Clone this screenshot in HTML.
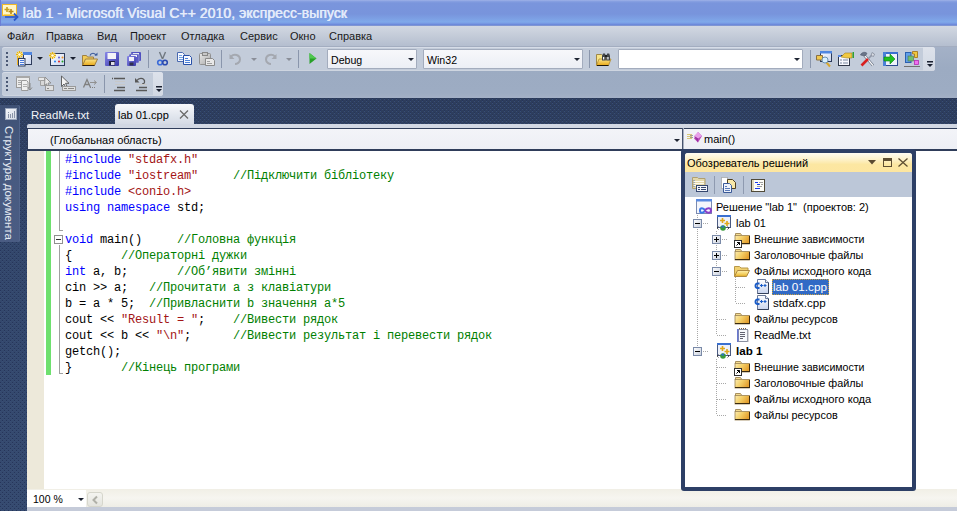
<!DOCTYPE html>
<html><head><meta charset="utf-8">
<style>
*{margin:0;padding:0;box-sizing:border-box}
html,body{width:957px;height:511px;overflow:hidden;background:#34496e;font-family:"Liberation Sans",sans-serif}
.a{position:absolute}
svg{position:absolute;overflow:visible}
#title{left:0;top:0;width:957px;height:26px;background:linear-gradient(#a3b5e8 0,#8aa2e2 1px,#7a95dc 3px,#7894dc 14px,#80a9ea 22px,#7492e0 24px,#6683d6 25px,#9aa8d0 26px)}
#title .t{left:22.5px;top:4.5px;font-size:13.9px;font-weight:normal;color:#e4ecfb;white-space:pre;letter-spacing:0.1px;text-shadow:0.6px 0 0 #e4ecfb}
#menu{left:0;top:26px;width:957px;height:21px;background:linear-gradient(#d2d8e2,#c3cbd8 50%,#b4becf);border-bottom:1px solid #a3adc0}
#menu span{position:absolute;top:4px;font-size:11px;color:#1a1a1a}
#dock{left:0;top:47px;width:957px;height:51px;background:linear-gradient(#a4b1c7,#9cabc2 40%,#9dacc3 90%,#a3b0c6)}
.tb{background:#c3ccda;border-radius:3px;box-shadow:inset 0 1px 0 #d6dce7,inset 0 -1px 0 #ced5e0}
.ovf{background:linear-gradient(#dde2eb,#d2d8e3);border-radius:0 3px 3px 0}
.sep{width:1px;background:#8592a8;border-right:1px solid #e4e8ef;width:2px}
.grip{width:2px;background:repeating-linear-gradient(#4a5874 0 2px,transparent 2px 4px)}
.combo{background:linear-gradient(#f7f8fb,#eceff5);border:1px solid #a3acbd;border-radius:1px;font-size:10.6px;color:#000;padding:3.5px 0 0 3px}
.dd{width:0;height:0;border-left:3px solid transparent;border-right:3px solid transparent;border-top:3px solid #1e2432}
#dark{left:0;top:98px;width:957px;height:413px}
.code{font-family:"Liberation Mono",monospace;font-size:12px;letter-spacing:-0.2px;color:#000;white-space:pre;line-height:16px}
.k{color:#0000ff}.s{color:#a31515}.c{color:#008000}
.tree div{position:absolute;white-space:pre;font-size:11px;color:#000}
</style></head><body>
<!-- title -->
<div id="title" class="a">
 <svg style="left:0;top:0" width="22" height="24" viewBox="0 0 22 24">
  <rect x="0" y="0" width="1" height="26" fill="#6a7fd6"/>
  <rect x="2.5" y="4.5" width="14" height="11" fill="#fff6c8" stroke="#f0b828"/>
  <path d="M3.5 14.5h12" stroke="#f8d868" stroke-width="1"/>
  <path d="M4.5 9.5h5M7 7v5" stroke="#c8a020" stroke-width="1.6"/>
  <path d="M8.5 11.5h5M11 9v5" stroke="#b88818" stroke-width="1.6"/>
  <path d="M5 17h11" stroke="#2a58c8" stroke-width="1.6"/>
  <path d="M14 13.5l3.5 3.5-3.5 3.5" stroke="#2a58c8" stroke-width="1.8" fill="none"/>
 </svg>
 <div class="a t">lab 1 - Microsoft Visual C++ 2010, экспресс-выпуск</div>
</div>
<!-- menu -->
<div id="menu" class="a">
 <span style="left:7px">Файл</span>
 <span style="left:46px">Правка</span>
 <span style="left:97px">Вид</span>
 <span style="left:130px">Проект</span>
 <span style="left:181px">Отладка</span>
 <span style="left:240px">Сервис</span>
 <span style="left:290px">Окно</span>
 <span style="left:329px">Справка</span>
</div>
<!-- toolbars -->
<div id="dock" class="a"></div>
<div class="a tb" style="left:2px;top:47px;width:933px;height:24px"></div>
<div class="a ovf" style="left:923px;top:47px;width:12px;height:24px"></div>
<div class="a tb" style="left:2px;top:72px;width:161px;height:24px"></div>
<div class="a ovf" style="left:153px;top:72px;width:10px;height:24px"></div>
<div class="a grip" style="left:6px;top:52px;height:15px"></div>
<div class="a grip" style="left:6px;top:77px;height:15px"></div>
<svg style="left:0;top:0" width="957" height="98" viewBox="0 0 957 98">
 <defs>
  <linearGradient id="gwin" x1="0" y1="0" x2="1" y2="1"><stop offset="0" stop-color="#ffffff"/><stop offset="1" stop-color="#c8d4ee"/></linearGradient>
  <linearGradient id="gfold" x1="0" y1="0" x2="0" y2="1"><stop offset="0" stop-color="#fbe58a"/><stop offset="1" stop-color="#e8a818"/></linearGradient>
  <linearGradient id="gflop" x1="0" y1="0" x2="1" y2="1"><stop offset="0" stop-color="#8888e8"/><stop offset="1" stop-color="#3838a8"/></linearGradient>
  <linearGradient id="ggray" x1="0" y1="0" x2="1" y2="1"><stop offset="0" stop-color="#e8e8e8"/><stop offset="1" stop-color="#a8a8a8"/></linearGradient>
  <radialGradient id="gspark"><stop offset="0" stop-color="#fffbe0"/><stop offset="0.5" stop-color="#f8d850"/><stop offset="1" stop-color="#f0c030" stop-opacity="0.3"/></radialGradient>
 </defs>
 <!-- new project -->
 <rect x="23.5" y="52.5" width="8" height="12" fill="url(#gwin)" stroke="#2e3c5a"/>
 <rect x="23" y="52" width="9" height="3" fill="#4f86e0"/>
 <rect x="17" y="57" width="1.5" height="8" fill="#f0b020"/>
 <circle cx="19.5" cy="54.5" r="3.3" fill="#f8e070" opacity="0.85"/><path d="M16.0 54.5h7M19.5 51.0v7M17.0 52.0l5 5M22.0 52.0l-5 5" stroke="#e8b010" stroke-width="1"/><circle cx="19.5" cy="54.5" r="1.3" fill="#fffef0"/>
 <rect x="18.5" y="58.5" width="6.5" height="7.5" fill="#f4f7ff" stroke="#2e3c5a"/>
 <path d="M20 60.5h4M20 62.5h4M20 64.5h4" stroke="#4a7ad8" stroke-width="1"/>
 <path d="M37 57h6l-3 3z" fill="#1a2030"/>
 <!-- add item -->
 <rect x="50.5" y="53.5" width="14" height="12" fill="url(#gwin)" stroke="#2e3c5a"/>
 <circle cx="59" cy="57.5" r="1" fill="#6060d0"/><circle cx="62.5" cy="57.5" r="1" fill="#f09020"/>
 <circle cx="55" cy="61.5" r="1" fill="#2080f0"/><circle cx="59" cy="61.5" r="1" fill="#e02020"/><circle cx="62.5" cy="61.5" r="1" fill="#20a020"/>
 <circle cx="52.5" cy="55.5" r="3.3" fill="#f8e070" opacity="0.85"/><path d="M49.0 55.5h7M52.5 52.0v7M50.0 53.0l5 5M55.0 53.0l-5 5" stroke="#e8b010" stroke-width="1"/><circle cx="52.5" cy="55.5" r="1.3" fill="#fffef0"/>
 <path d="M70 57h6l-3 3z" fill="#1a2030"/>
 <!-- open -->
 <path d="M82.5 65.5V55.5h4l1 1.5h6v8.5z" fill="#f2cc58" stroke="#a08040"/>
 <path d="M82.5 65.5l3-6.5h12l-3 6.5z" fill="url(#gfold)" stroke="#a08040"/>
 <path d="M82.5 65.5h12" stroke="#302010" stroke-width="1"/>
 <path d="M90 55.5c1-3 5-3 6 0" stroke="#3a5a9a" stroke-width="1.2" fill="none"/>
 <path d="M94.5 55.5h3v-3z" fill="#3a5a9a"/>
 <!-- save -->
 <rect x="105" y="52" width="14" height="14" rx="1" fill="url(#gflop)"/>
 <rect x="107.5" y="53" width="8.5" height="6" fill="#f4f4f8"/>
 <rect x="109" y="61" width="6" height="4.5" fill="#202040"/>
 <rect x="111" y="62" width="3.5" height="3" fill="#e0e0e8"/>
 <!-- save all -->
 <rect x="131" y="52" width="10" height="9" rx="1" fill="#5050c0"/>
 <rect x="133" y="53" width="6" height="2" fill="#f0f0f8"/>
 <rect x="129" y="54" width="10" height="9" rx="1" fill="#5a5ac8" stroke="#c0c8d8" stroke-width="0.5"/>
 <rect x="131" y="55" width="6" height="2" fill="#f0f0f8"/>
 <rect x="127" y="56" width="9" height="10" rx="1" fill="url(#gflop)"/>
 <rect x="129" y="57" width="5" height="4" fill="#f0f0f8"/>
 <rect x="129.5" y="62.5" width="4" height="3" fill="#303050"/>
 <!-- sep -->
 <rect x="148" y="50" width="1" height="18" fill="#8a96ac"/>
 <!-- cut -->
 <path d="M159.5 52l3 7M165.5 52l-3 7" stroke="#707880" stroke-width="1.4"/>
 <circle cx="160" cy="62.5" r="2.3" fill="none" stroke="#3a6ad8" stroke-width="1.6"/>
 <circle cx="165" cy="62.5" r="2.3" fill="none" stroke="#2a4ab0" stroke-width="1.6"/>
 <!-- copy -->
 <path d="M177.5 52.5h5l2 2v7h-7z" fill="#f6f8ff" stroke="#4a6ab0"/>
 <path d="M179 55.5h3M179 57.5h4M179 59.5h4" stroke="#70a0e0"/>
 <path d="M183.5 55.5h6l2 2v7h-8z" fill="#f6f8ff" stroke="#2850a8"/>
 <path d="M185 58.5h3M185 60.5h5M185 62.5h5" stroke="#4a80d8"/>
 <!-- paste gray -->
 <rect x="199.5" y="53.5" width="11" height="11" rx="1" fill="url(#ggray)" stroke="#909090"/>
 <rect x="202.5" y="52.5" width="5" height="3" fill="#c8c8c8" stroke="#888"/>
 <path d="M205.5 58.5h7l2 2v5h-9z" fill="#e8e8e8" stroke="#8a8a8a"/>
 <path d="M207 61.5h3M207 63.5h5" stroke="#a0a0a0"/>
 <!-- sep -->
 <rect x="221" y="50" width="1" height="18" fill="#8a96ac"/>
 <!-- undo -->
 <path d="M231 56.5c3-3 9-2 9 3c0 3-3 4.5-5 4.5" stroke="#a4a8b0" stroke-width="2" fill="none"/>
 <path d="M229.5 54v5h5z" fill="#a4a8b0"/>
 <path d="M251 58h6l-3 3z" fill="#8a8e98"/>
 <!-- redo -->
 <path d="M275 56.5c-3-3-9-2-9 3c0 3 3 4.5 5 4.5" stroke="#a4a8b0" stroke-width="2" fill="none"/>
 <path d="M276.5 54v5h-5z" fill="#a4a8b0"/>
 <path d="M286 58h6l-3 3z" fill="#8a8e98"/>
 <!-- sep -->
 <rect x="298" y="50" width="1" height="18" fill="#8a96ac"/>
 <!-- play -->
 <path d="M309.5 53l7 5.5-7 5.5z" fill="#28a028"/>
 <path d="M309.5 53l7 5.5h-7z" fill="#50c850"/>
 <!-- sep -->
 <rect x="589" y="50" width="1" height="18" fill="#8a96ac"/>
 <!-- find in files -->
 <path d="M596.5 65.5V54.5h5l1 1h3v4" fill="#f8e488" stroke="#a08848"/>
 <path d="M596.5 65.5l2.5-6.5h12l-2.5 6.5z" fill="url(#gfold)" stroke="#b08a30" stroke-width="0.8"/>
 <path d="M597 65.5h11.5" stroke="#201808" stroke-width="1"/>
 <path d="M602 60.5v-4.5l1-2.5h2l.8 2.5v4.5z" fill="#404448"/>
 <path d="M606.2 60.5v-4.5l1-2.5h2l.8 2.5v4.5z" fill="#404448"/>
 <rect x="605" y="55" width="2" height="2" fill="#202020"/>
 <rect x="603" y="57" width="1.3" height="2.5" fill="#f4f4f4"/>
 <rect x="607.3" y="57" width="1.3" height="2.5" fill="#f4f4f4"/>
 <!-- sep -->
 <rect x="810" y="50" width="1" height="18" fill="#8a96ac"/>
 <!-- find window -->
 <rect x="820.5" y="51.5" width="11" height="10" fill="url(#gwin)" stroke="#2e3c5a"/>
 <rect x="820" y="51" width="12" height="2.5" fill="#4f86e0"/>
 <path d="M816.5 60V55.5h6v4.5z" fill="#f0c850" stroke="#8a7040"/>
 <path d="M826.5 62.5l3.5 4" stroke="#d8a830" stroke-width="2"/>
 <circle cx="825" cy="60" r="3" fill="#d8f0ff" stroke="#6a90b0"/>
 <!-- properties -->
 <rect x="838.5" y="55.5" width="11" height="10" fill="#f6f8ff" stroke="#30384a"/>
 <rect x="838" y="55" width="3" height="2" fill="#5a8ae0"/>
 <path d="M840 60h2M843 60h5M840 63h2M843 63h5" stroke="#7a88a0"/>
 <path d="M841 57l4-4h7v5h-5z" fill="#f0c840" stroke="#a08020" stroke-width="0.6"/>
 <rect x="852.5" y="52" width="1.5" height="6" fill="#30a030"/>
 <!-- tools -->
 <path d="M864.5 55.5l8.5 10" stroke="#5a6478" stroke-width="2.6"/>
 <path d="M864.5 55.5l8.5 10" stroke="#f8f8f8" stroke-width="1.2"/>
 <path d="M860.5 55c1-3 5-3.5 6.5-1.5l-2 2.5z" fill="#6a7488" stroke="#4a5468" stroke-width="0.6"/>
 <path d="M868.5 58.5l5-5" stroke="#9098a8" stroke-width="1.6"/>
 <path d="M872 52.5l2.5 1.5-1 2.5-2.5-1z" fill="#d8dce4" stroke="#707888" stroke-width="0.6"/>
 <path d="M861.5 65.5l6.5-6.5" stroke="#d82020" stroke-width="2.6"/>
 <!-- export -->
 <rect x="883.5" y="52.5" width="14" height="13" fill="#eef2fa" stroke="#2a4a90"/>
 <rect x="883" y="52" width="15" height="2" fill="#3a70d0"/>
 <rect x="883" y="52" width="3" height="14" fill="#4a80d8"/>
 <path d="M884 57h6v-3l5 5-5 5v-3h-6z" fill="#20c020" stroke="#108010" stroke-width="0.6"/>
 <!-- class/toolbox -->
 <rect x="905.5" y="52.5" width="5.5" height="10" fill="#60a0e8" stroke="#2a60b0"/>
 <rect x="908" y="56" width="5.5" height="5" fill="#70c070" stroke="#507050" stroke-width="0.6"/>
 <path d="M912.5 51.5h5v6h-3v-3.5h-2z" fill="#f0c840" stroke="#a07010" stroke-width="0.8"/>
 <rect x="914.5" y="60.5" width="4" height="4" fill="#f070f0" stroke="#b030b0" stroke-width="0.8"/>
 <rect x="904" y="66" width="16" height="1" fill="#707070"/>
 <!-- chevrons -->
 <rect x="927" y="61" width="6" height="1.5" fill="#1a2030"/>
 <path d="M927 64h6l-3 3z" fill="#1a2030"/>
 <rect x="156" y="86" width="6" height="1.5" fill="#1a2030"/>
 <path d="M156 89h6l-3 3z" fill="#1a2030"/>
 <!-- toolbar 2 gray icons -->
 <rect x="16.5" y="76.5" width="13" height="11" fill="#ececec" stroke="#9a9a9a"/>
 <rect x="16" y="76" width="14" height="2" fill="#a8a8a8"/>
 <path d="M18 80.5h3M18 82.5h3M18 84.5h3" stroke="#a8a8a8" stroke-width="1"/>
 <path d="M21.5 80.5h5l1.5 1.5v8.5h-6.5z" fill="#f0f0f0" stroke="#9a9a9a"/>
 <path d="M23 84.5h4M23 86.5h4" stroke="#b0b0b0" stroke-width="1"/>
 <path d="M30 83v7M28 87.5l2 2.5 2-2.5" stroke="#8a8a8a" stroke-width="1" fill="none"/>
 <path d="M38.5 77.5h6v3h-6z" fill="#e8e8e8" stroke="#a8a8a8"/>
 <path d="M40.5 80.5h6v5h-6z" fill="#d8d8d8" stroke="#a0a0a0"/>
 <path d="M45 77l6 6h-3l1.5 3.5-1.5.7-1.5-3.5-2 2z" fill="#e8e8e8" stroke="#8a8a8a" stroke-width="0.9"/>
 <rect x="45.5" y="85.5" width="8" height="5" fill="#e0e0e0" stroke="#9a9a9a"/>
 <path d="M47 88.5h2" stroke="#888" stroke-width="1"/>
 <path d="M61.5 76v10.5l2.5-2.5 2 4 1.5-.7-2-4h3.5z" fill="#f4f4f4" stroke="#555" stroke-width="0.9"/>
 <rect x="62.5" y="86.5" width="13" height="4" fill="#e0e0e0" stroke="#9a9a9a"/>
 <path d="M64 88.5h3M68 88.5h6" stroke="#888" stroke-width="1"/>
 <path d="M83.5 87.5l3.5-8 3.5 8M85 84.5h4" stroke="#808080" stroke-width="1.3" fill="none"/>
 <path d="M90 82.5h6M94 80.5l2.5 2-2.5 2" stroke="#909090" stroke-width="1" fill="none"/>
 <path d="M90 87.5h1M92 87.5h1M94 87.5h1" stroke="#808080" stroke-width="1"/>
 <rect x="104" y="75" width="1" height="18" fill="#8a96ac"/>
 <path d="M112 78.5h1M114 78.5h11M117 87.5h8M114 90.5h11" stroke="#585858" stroke-width="1.3"/>
 <path d="M115 81.5h10M115 84.5h10" stroke="#c8c8c8" stroke-width="1"/>
 <path d="M137 80.5c1.5-3 7-3 7.5 .5c.5 2.5-1.5 3-2.5 3" stroke="#585858" stroke-width="1.3" fill="none"/>
 <path d="M135 78v4.5h4.5z" fill="#585858"/>
 <path d="M137 84.5h10" stroke="#c8c8c8" stroke-width="1"/>
 <path d="M139 87.5h8M136 90.5h11" stroke="#585858" stroke-width="1.3"/>
</svg>
<div class="a combo" style="left:327px;top:49px;width:90px;height:20px">Debug</div>
<div class="a dd" style="left:408px;top:58px"></div>
<div class="a combo" style="left:423px;top:49px;width:160px;height:20px">Win32</div>
<div class="a dd" style="left:574px;top:58px"></div>
<div class="a combo" style="left:618px;top:49px;width:185px;height:20px;background:#fff"></div>
<div class="a dd" style="left:794px;top:58px"></div>
<!-- dark area -->
<svg id="dark" width="957" height="413">
 <defs>
  <linearGradient id="dg" x1="0" y1="0" x2="0" y2="1"><stop offset="0" stop-color="#2d3d5c"/><stop offset="0.35" stop-color="#33476b"/><stop offset="1" stop-color="#364b70"/></linearGradient>
  <pattern id="dp" width="4" height="4" patternUnits="userSpaceOnUse">
  <rect x="0" y="0" width="1" height="1" fill="#26355a"/>
  <rect x="2" y="2" width="1" height="1" fill="#26355a"/>
  <rect x="0" y="1" width="1" height="1" fill="#394e76"/>
  <rect x="2" y="3" width="1" height="1" fill="#394e76"/>
 </pattern></defs>
 <rect width="957" height="413" fill="url(#dg)"/>
 <rect width="957" height="413" fill="url(#dp)"/>
</svg>
<!-- vertical tab -->
<div class="a" style="left:0px;top:105px;width:20px;height:137px;background:linear-gradient(#3f5175,#475a80 40%,#4a5c83);border-radius:0 2px 2px 0;box-shadow:inset -1px 0 0 #52658c"></div>
<div class="a" style="left:5px;top:108px;width:12px;height:12px;background:linear-gradient(135deg,#f4f6fa,#d8dee8);border:1px solid #9aa6bc"></div>
<svg style="left:5px;top:108px" width="12" height="12"><path d="M3.5 4v1M3.5 6v4M5.5 6v4M7.5 5v5M9.5 3v7" stroke="#8a94a8" stroke-width="1"/></svg>
<div class="a" style="left:15px;top:125.5px;transform-origin:0 0;transform:rotate(90deg);font-size:11.5px;color:#e8edf5;white-space:pre">Структура документа</div>
<!-- tabs -->
<div class="a" style="left:31px;top:109px;font-size:11.4px;color:#f2f4f8;white-space:pre">ReadMe.txt</div>
<div class="a" style="left:115px;top:104px;width:79px;height:21px;background:linear-gradient(#f7f8fb,#e4e8ef 50%,#d3d9e4);border-radius:3px 3px 0 0"></div>
<div class="a" style="left:118px;top:109px;font-size:11px;color:#000;white-space:pre">lab 01.cpp</div>
<svg style="left:179px;top:110px" width="10" height="9"><path d="M1 0.5L9 8.5M9 0.5L1 8.5" stroke="#6a6a6a" stroke-width="1.3"/></svg>
<!-- editor frame -->
<div class="a" style="left:27px;top:124px;width:930px;height:4px;background:#d1d7e3;border-radius:2px 0 0 0"></div>
<div class="a" style="left:27px;top:128px;width:930px;height:23px;background:#2f3d5a"></div>
<div class="a" style="left:28px;top:129px;width:929px;height:20px;background:linear-gradient(#f3f4f8,#edeff5)"></div>
<div class="a" style="left:50px;top:134px;font-size:11px;color:#000;white-space:pre">(Глобальная область)</div>
<div class="a dd" style="left:674px;top:138.5px"></div>
<div class="a" style="left:682px;top:128px;width:2px;height:21px;background:linear-gradient(90deg,#46536e 50%,#a8b0c0 50%)"></div>
<svg style="left:687px;top:131px" width="16" height="13" viewBox="0 0 16 13">
 <path d="M0 3.5h5M0 5.5h5M0 7.5h5" stroke="#d8c878" stroke-width="1"/>
 <path d="M3 4.5h3M3 6.5h3" stroke="#8a8a80" stroke-width="0.8"/>
 <path d="M11 1l4 4-4 6.5-4-4z" fill="#b848b8"/>
 <path d="M11 1l4 4-4 2.5-4-2.5z" fill="#e8a0e8"/>
 <path d="M7 5l4 2.5v4z" fill="#9a30a0"/>
</svg>
<div class="a" style="left:704px;top:133px;font-size:11px;color:#000;white-space:pre">main()</div>
<!-- code area -->
<div class="a" style="left:27px;top:151px;width:930px;height:338px;background:#fff"></div>
<div class="a" style="left:27px;top:151px;width:17px;height:338px;background:#ede9da"></div>
<div class="a" style="left:46px;top:151px;width:5px;height:224px;background:#6ee06e"></div>
<div class="a" style="left:59px;top:151px;width:1px;height:80px;background:#a0a0a0"></div>
<div class="a" style="left:59px;top:230px;width:4px;height:1px;background:#a0a0a0"></div>
<div class="a" style="left:54px;top:235px;width:9px;height:9px;border:1px solid #909090;background:#fff"></div>
<div class="a" style="left:56px;top:239px;width:5px;height:1px;background:#303030"></div>
<div class="a" style="left:59px;top:245px;width:1px;height:129px;background:#a0a0a0"></div>
<div class="a" style="left:59px;top:373px;width:4px;height:1px;background:#a0a0a0"></div>
<div class="a code" style="left:65px;top:151.5px"><span class="k">#include</span> <span class="s">"stdafx.h"</span>
<span class="k">#include</span> <span class="s">"iostream"</span>     <span class="c">//Підключити бібліотеку</span>
<span class="k">#include</span> <span class="s">&lt;conio.h&gt;</span>
<span class="k">using</span> <span class="k">namespace</span> std;

<span class="k">void</span> main()     <span class="c">//Головна функція</span>
{       <span class="c">//Операторні дужки</span>
<span class="k">int</span> a, b;       <span class="c">//Об’явити змінні</span>
cin &gt;&gt; a;   <span class="c">//Прочитати а з клавіатури</span>
b = a * 5;  <span class="c">//Привласнити b значення а*5</span>
cout &lt;&lt; <span class="s">"Result = "</span>;    <span class="c">//Вивести рядок</span>
cout &lt;&lt; b &lt;&lt; <span class="s">"\n"</span>;      <span class="c">//Вивести результат і перевести рядок</span>
getch();
}       <span class="c">//Кінець програми</span></div>
<!-- bottom scrollbar -->
<div class="a" style="left:27px;top:489px;width:930px;height:18px;background:linear-gradient(#f1efe6,#f6f5f0 50%,#eeede6)"></div>
<div class="a" style="left:27px;top:490px;width:59px;height:17px;background:#fff"></div>
<div class="a" style="left:33px;top:493px;font-size:10.5px;color:#000;white-space:pre">100 %</div>
<div class="a dd" style="left:78px;top:498px"></div>
<div class="a" style="left:87px;top:492px;width:16px;height:15px;background:linear-gradient(#f4f4f0,#e4e4de);border:1px solid #d6d6cc;border-radius:3px"></div>
<svg style="left:92px;top:496px" width="6" height="8"><path d="M5 0.5L1.5 4 5 7.5" stroke="#b0b0a8" stroke-width="2" fill="none"/></svg>
<div class="a" style="left:27px;top:507px;width:930px;height:4px;background:#c5cbd9"></div>
<!-- solution explorer -->
<div class="a" style="left:681px;top:149px;width:235px;height:342px;background:#2d3f66;border-radius:3px"></div>
<div class="a" style="left:685px;top:153px;width:227px;height:334px;background:#fff;border-radius:3px 3px 0 0"></div>
<div class="a" style="left:685px;top:153px;width:227px;height:19px;border-radius:3px 3px 0 0;background:linear-gradient(#fffcf2,#fdf1c8 35%,#fce7a2 60%,#fde6a0)"></div>
<div class="a" style="left:687px;top:157px;font-size:11px;color:#000;white-space:pre">Обозреватель решений</div>
<svg style="left:868px;top:160px" width="9" height="5"><path d="M0 0h8l-4 4.5z" fill="#5a4a30"/></svg>
<div class="a" style="left:883px;top:158px;width:9px;height:9px;border:1px solid #5e4e32;border-top-width:3px"></div>
<svg style="left:898px;top:158px" width="10" height="9"><path d="M0.5 0.5L9.5 8.5M9.5 0.5L0.5 8.5" stroke="#5e4e32" stroke-width="1.3"/></svg>
<div class="a" style="left:685px;top:172px;width:227px;height:25px;background:#bcc7d8"></div>
<svg style="left:0;top:0" width="957" height="511" viewBox="0 0 957 511">
 <defs>
  <linearGradient id="gbox" x1="0" y1="0" x2="1" y2="1"><stop offset="0" stop-color="#ffffff"/><stop offset="1" stop-color="#c8cfdc"/></linearGradient>
  <linearGradient id="gf2" x1="0" y1="0" x2="0" y2="1"><stop offset="0" stop-color="#fdf0b0"/><stop offset="0.6" stop-color="#f4cf60"/><stop offset="1" stop-color="#e0a820"/></linearGradient>
  <g id="fold">
   <linearGradient id="gfh" x1="0" y1="0" x2="1" y2="0.4"><stop offset="0" stop-color="#fcecb0"/><stop offset="0.5" stop-color="#f4cf68"/><stop offset="1" stop-color="#e4a030"/></linearGradient>
   <path d="M1.5 4V1.5h5l1 1.5" fill="#f4dc90" stroke="#a89060"/>
   <rect x="1" y="3.5" width="14.5" height="8.5" fill="url(#gfh)" stroke="#9a8050" stroke-width="0.8"/>
   <path d="M1 11.5h15M15.5 4v8" stroke="#3a2a10" stroke-width="1"/>
  </g>
  <g id="ofold">
   <path d="M0.5 12.5V2.5h5l1.5 1.5h7v3" fill="#f0d070" stroke="#b89848"/>
   <path d="M0.5 12.5l3-6h12l-3 6z" fill="url(#gf2)" stroke="#b08a40"/>
  </g>
  <g id="cpp">
   <linearGradient id="gcpp" x1="0" y1="0" x2="0" y2="1"><stop offset="0" stop-color="#ffffff"/><stop offset="1" stop-color="#c8d4ee"/></linearGradient>
   <path d="M3.5 0.5h8l3 3v11h-11z" fill="url(#gcpp)" stroke="#6a7898"/>
   <path d="M3.5 14.5h11v-11" fill="none" stroke="#34405a"/>
   <path d="M11.5 0.5v3h3" fill="#e8eef8" stroke="#6a7898"/>
   <path d="M5.5 4.5H3.6Q1.5 4.5 1.5 6.8Q1.5 9 3.6 9H5.5" stroke="#1a5cc8" stroke-width="1.9" fill="none"/>
   <path d="M6 6.5h3M7.5 5v3M9.5 6.5h3M11 5v3" stroke="#1a5cc8" stroke-width="1.1"/>
  </g>
  <g id="proj">
   <rect x="1.5" y="0.5" width="13" height="12" fill="#eef2fa" stroke="#4a5a80"/>
   <rect x="1" y="0" width="14" height="2" fill="#3a70d0"/>
   <path d="M4 5.5h5M6.5 3v5" stroke="#e0a818" stroke-width="1.6"/>
   <path d="M8.5 8.5h5M11 6v5" stroke="#e0a818" stroke-width="1.6"/>
   <circle cx="7" cy="13" r="2.8" fill="#3a9a3a"/>
   <path d="M5 12a2 2 0 0 1 3-1.2l-.5 2.2z" fill="#2a70d0"/>
   <path d="M1 13l1.5-1.5M1 13l1.5 1.5M13 13l-1.5-1.5M13 13l-1.5 1.5" stroke="#303030" stroke-width="0.8"/>
  </g>
  <g id="shortcut">
   <rect x="0.5" y="0.5" width="7" height="7" fill="#fff" stroke="#303030"/>
   <path d="M2.5 5.5l3-3M3 2.5h2.5v2.5" stroke="#000" stroke-width="1" fill="none"/>
  </g>
  <g id="plus"><rect x="0.5" y="0.5" width="8" height="8" fill="url(#gbox)" stroke="#7a8aa8"/><path d="M2 4.5h5M4.5 2v5" stroke="#000"/></g>
  <g id="minus"><rect x="0.5" y="0.5" width="8" height="8" fill="url(#gbox)" stroke="#7a8aa8"/><path d="M2 4.5h5" stroke="#000"/></g>
 </defs>
 <g stroke="#a8a8a8" stroke-dasharray="1 1" stroke-width="1">
  <path d="M697.5 215V347"/>
  <path d="M703 223.5h6M703 351.5h6"/>
  <path d="M716.5 231V335M716.5 359V415"/>
  <path d="M722 239.5h6M722 255.5h6M722 271.5h6"/>
  <path d="M717 319.5h10M717 335.5h10M717 367.5h10M717 383.5h10M717 399.5h10M717 415.5h10"/>
  <path d="M735.5 277V303"/>
  <path d="M736 287.5h10M736 303.5h10"/>
 </g>
 <!-- solution icon -->
 <rect x="696.5" y="199.5" width="15" height="14" fill="#f4f6fc" stroke="#7a8ab0"/>
 <rect x="696" y="199" width="16" height="2.5" fill="#5a8ae0"/>
 <path d="M705 210.5c-1.5-3-5-3-5 0s3.5 3 5 0" stroke="#3a78e8" stroke-width="2" fill="none"/>
 <path d="M705 210.5c1.5-3 6-3 6 0s-4.5 3-6 0" stroke="#8a40c8" stroke-width="2" fill="none"/>
 <use href="#minus" x="693" y="219"/>
 <use href="#proj" x="716" y="215"/>
 <use href="#plus" x="712" y="235"/>
 <use href="#fold" x="734" y="232"/>
 <use href="#shortcut" x="734" y="240"/>
 <use href="#plus" x="712" y="251"/>
 <use href="#fold" x="734" y="248"/>
 <use href="#minus" x="712" y="267"/>
 <use href="#ofold" x="734" y="264"/>
 <use href="#cpp" x="754" y="279"/>
 <use href="#cpp" x="754" y="295"/>
 <use href="#fold" x="734" y="312"/>
 <!-- readme -->
 <rect x="738.5" y="329.5" width="9" height="12" fill="#f6f8fc" stroke="#8a90a0"/>
 <rect x="747.5" y="330" width="1" height="12" fill="#b0b0b8"/>
 <rect x="737" y="329" width="1.5" height="13" fill="#6a78d0"/>
 <path d="M739 328.5h1M741 328.5h1M743 328.5h1M745 328.5h1" stroke="#806040" stroke-width="1.2"/>
 <path d="M740 332.5h5M740 334.5h5M740 336.5h5M740 338.5h3" stroke="#505060" stroke-width="0.9"/>
 <use href="#minus" x="693" y="347"/>
 <use href="#proj" x="716" y="343"/>
 <use href="#fold" x="734" y="360"/>
 <use href="#shortcut" x="734" y="368"/>
 <use href="#fold" x="734" y="376"/>
 <use href="#fold" x="734" y="392"/>
 <use href="#fold" x="734" y="408"/>
 <!-- SE toolbar icons -->
 <path d="M692.5 188.5v-11h5l1 1h6.5v10z" fill="#e4d8a8" stroke="#b0a070"/>
 <path d="M694 181.5h10M694 183.5h10M694 185.5h10" stroke="#fbf8ee" stroke-width="1"/>
 <path d="M693.5 180.5h1M693.5 182.5h1M693.5 184.5h1M693.5 186.5h1" stroke="#5a78b8" stroke-width="1"/>
 <rect x="696.5" y="185.5" width="11" height="6" fill="#f4f6fb" stroke="#34466e"/>
 <path d="M698 187.5h2M701 187.5h5M698 189.5h2M701 189.5h5" stroke="#34466e" stroke-width="1"/>
 <path d="M721.5 177.5h6v11h-6z" fill="#ffffff" stroke="#888" stroke-dasharray="1 1"/>
 <path d="M727.5 179.5h5l3 3v6h-8z" fill="#f8e8a8" stroke="#504020"/>
 <path d="M723.5 183.5h6l2 2v7h-8z" fill="#eef2fa" stroke="#3a5a98"/>
 <path d="M725 186.5h2M725 188.5h5M725 190.5h5" stroke="#5a7ab8" stroke-width="1"/>
 <rect x="751.5" y="179.5" width="13" height="12" fill="#fdfdf8" stroke="#504a38"/>
 <rect x="752" y="180" width="2" height="11" fill="#e0d8b8"/>
 <path d="M755 182.5h3M757 184.5h3M755 188.5h5" stroke="#1a3ae8" stroke-width="1"/>
 <path d="M759 182.5h4M761 184.5h2M757 186.5h5" stroke="#a0a0a0" stroke-width="1"/>
 <rect x="714" y="176" width="1" height="18" fill="#8e9ab0"/>
 <rect x="743" y="176" width="1" height="18" fill="#8e9ab0"/>
</svg>
<div class="a" style="left:772px;top:279px;width:57px;height:16px;background:#316ac5;outline:1px dotted #c8a040;outline-offset:-1px"></div>
<div class="tree">
 <div style="left:716px;top:201px">Решение "lab 1"  (проектов: 2)</div>
 <div style="left:736px;top:217px">lab 01</div>
 <div style="left:754px;top:233.38px;font-size:10.58px">Внешние зависимости</div>
 <div style="left:754px;top:249.16px;font-size:10.82px">Заголовочные файлы</div>
 <div style="left:754px;top:264.87px;font-size:11.15px">Файлы исходного кода</div>
 <div style="left:773px;top:280.37px;color:#fff;font-size:11.7px">lab 01.cpp</div>
 <div style="left:773px;top:296.50px;font-size:11.55px">stdafx.cpp</div>
 <div style="left:754px;top:313.13px;font-size:10.86px">Файлы ресурсов</div>
 <div style="left:754px;top:328.91px;font-size:11.1px">ReadMe.txt</div>
 <div style="left:736px;top:343.96px;font-weight:bold;font-size:11.6px">lab 1</div>
 <div style="left:754px;top:361.38px;font-size:10.58px">Внешние зависимости</div>
 <div style="left:754px;top:377.16px;font-size:10.82px">Заголовочные файлы</div>
 <div style="left:754px;top:392.87px;font-size:11.15px">Файлы исходного кода</div>
 <div style="left:754px;top:409.13px;font-size:10.86px">Файлы ресурсов</div>
</div>

</body></html>
